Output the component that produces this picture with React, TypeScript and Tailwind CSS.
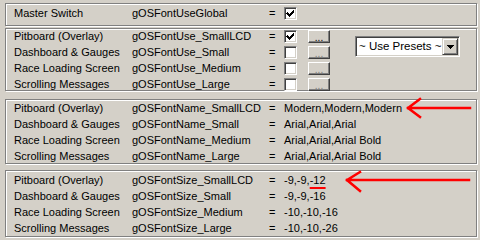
import React from 'react';

const font = { fontFamily: '"Liberation Sans", Arial, sans-serif' };

const Check = ({ on }: { on?: boolean }) => (
  <div className="w-[13px] h-[13px] bg-white border border-t-[#808080] border-l-[#808080] border-b-white border-r-white shadow-[inset_1px_1px_0_#404040,inset_-1px_-1px_0_#d4d0c8] flex items-center justify-center">
    {on && (
      <svg width="9" height="9" viewBox="0 0 9 9" shapeRendering="crispEdges">
        <path d="M1 3h1v1h1v1h1v-1h1v-1h1v-1h1v-1h1v3h-1v1h-1v1h-1v1h-1v1h-1v-1h-1v-1h-1v-1h-1z" fill="#000" />
      </svg>
    )}
  </div>
);

const DotsButton = ({ enabled }: { enabled?: boolean }) => (
  <div className="w-[22px] h-[13px] bg-[#d4d0c8] border border-t-white border-l-white border-b-[#404040] border-r-[#404040] shadow-[inset_-1px_-1px_0_#808080] flex items-end justify-center">
    <span className={`text-[10px] leading-[9px] ${enabled ? 'text-black' : 'text-[#808080]'}`}>...</span>
  </div>
);

const Panel = ({ className, children }: { className: string; children: React.ReactNode }) => (
  <div className={`ml-[5px] w-[472px] border border-[#808080] shadow-[inset_1px_1px_0_#fff,1px_1px_0_#fff] ${className}`}>
    {children}
  </div>
);

const Row = ({ label, name, children }: { label: string; name: string; children: React.ReactNode }) => (
  <div className="flex items-center h-[16px] whitespace-nowrap">
    <span className="w-[126px] pl-[8px] shrink-0">{label}</span>
    <span className="w-[137px] shrink-0">{name}</span>
    <span className="w-[15px] shrink-0">=</span>
    {children}
  </div>
);

const labels = ['Pitboard (Overlay)', 'Dashboard & Gauges', 'Race Loading Screen', 'Scrolling Messages'];

export default function App() {
  return (
    <div className="relative w-[480px] h-[240px] bg-[#d4d0c8] text-black text-[11px] leading-[16px] pt-[3px] overflow-hidden" style={font}>
      <Panel className="h-[23px] pt-[1px]">
        <Row label="Master Switch" name="gOSFontUseGlobal">
          <Check on />
        </Row>
      </Panel>

      <Panel className="mt-[2px] h-[63px] flex">
        <div className="flex flex-col">
          {['SmallLCD', 'Small', 'Medium', 'Large'].map((s, i) => (
            <div key={s} className={i === 0 ? 'h-[16px] -mt-[1px]' : 'h-[16px]'}>
              <Row label={labels[i]} name={`gOSFontUse_${s}`}>
                <div className="flex items-center gap-[11px]">
                  <Check on={i === 0} />
                  <DotsButton enabled={i === 0} />
                </div>
              </Row>
            </div>
          ))}
        </div>
        <div className="ml-[25px] mt-[7px] w-[105px] h-[21px] bg-white border border-t-[#808080] border-l-[#808080] border-b-white border-r-white shadow-[inset_1px_1px_0_#404040,inset_-1px_-1px_0_#d4d0c8] flex items-center p-[1px]">
          <span className="flex-1 pl-[2px] text-[11.5px] leading-[15px] whitespace-nowrap">~ Use Presets ~</span>
          <div className="w-[16px] h-[17px] shrink-0 bg-[#d4d0c8] border border-t-[#d4d0c8] border-l-[#d4d0c8] border-b-[#404040] border-r-[#404040] shadow-[inset_1px_1px_0_#fff,inset_-1px_-1px_0_#808080] flex items-center justify-center">
            <svg width="7" height="4" viewBox="0 0 7 4" shapeRendering="crispEdges">
              <path d="M0 0h7v1h-1v1h-1v1h-1v1h-1v-1h-1v-1h-1v-1h-1z" fill="#000" />
            </svg>
          </div>
        </div>
      </Panel>

      <Panel className="mt-[8px] h-[65px]">
        {[
          ['SmallLCD', 'Modern,Modern,Modern'],
          ['Small', 'Arial,Arial,Arial'],
          ['Medium', 'Arial,Arial,Arial Bold'],
          ['Large', 'Arial,Arial,Arial Bold'],
        ].map(([s, v], i) => (
          <Row key={s} label={labels[i]} name={`gOSFontName_${s}`}>
            <span>{v}</span>
          </Row>
        ))}
      </Panel>

      <Panel className="mt-[6px] h-[67px] pt-[1px]">
        {[
          ['SmallLCD', '-9,-9,', '-12'],
          ['Small', '-9,-9,-16', ''],
          ['Medium', '-10,-10,-16', ''],
          ['Large', '-10,-10,-26', ''],
        ].map(([s, v, u], i) => (
          <Row key={s} label={labels[i]} name={`gOSFontSize_${s}`}>
            <span>
              {v}
              {u && <span className="underline decoration-[#ff0000] decoration-2 underline-offset-[3px]">{u}</span>}
            </span>
          </Row>
        ))}
      </Panel>

      {/* red annotation arrows */}
      <svg className="absolute left-0 top-0 pointer-events-none" width="480" height="240">
        <g stroke="#ff0000" strokeWidth="2.5" fill="none" strokeLinecap="square">
          <path d="M408 108H470M408 108L420 99M408 108L420 117" />
          <path d="M347 180H469M347 180L360 172M347 180L360 191" />
        </g>
      </svg>
    </div>
  );
}
